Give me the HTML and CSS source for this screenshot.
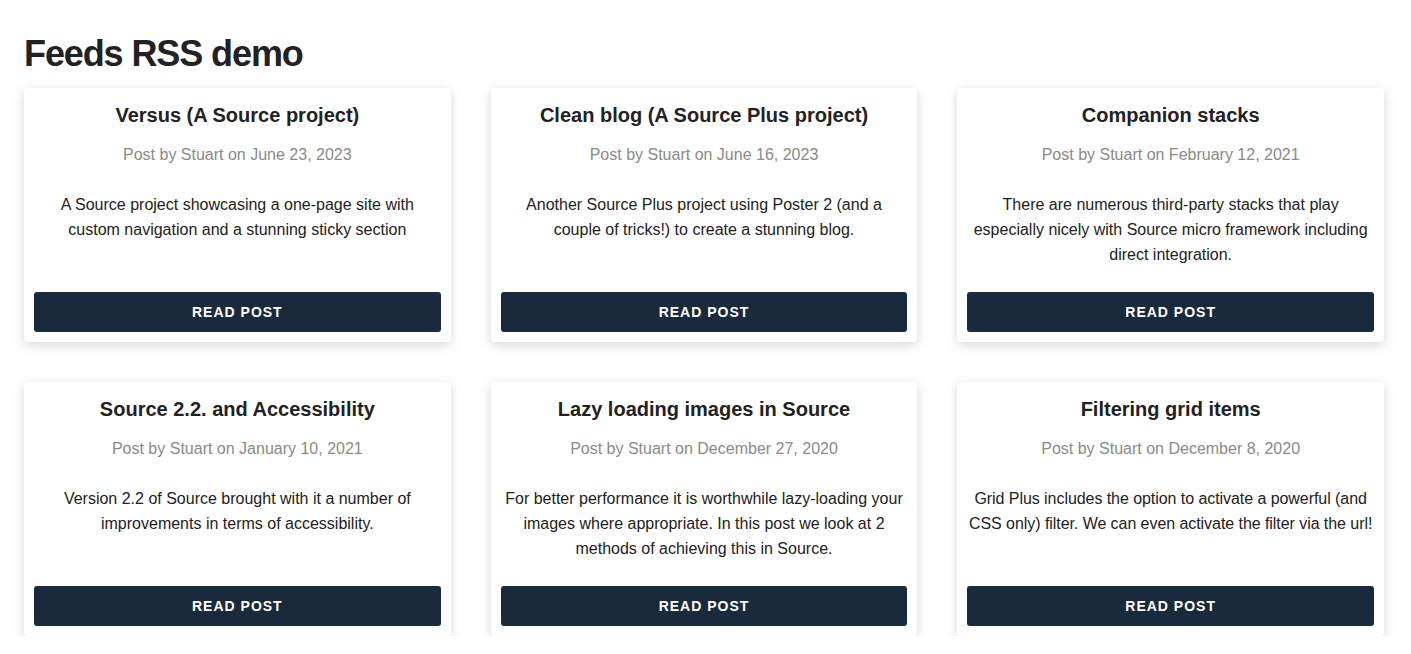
FILE: index.html
```html
<!DOCTYPE html>
<html lang="en">
<head>
<meta charset="utf-8">
<title>Feeds RSS demo</title>
<link rel="stylesheet" href="styles.css">
</head>
<body>
<main class="page">
  <h1 class="page-title">Feeds RSS demo</h1>
  <div class="grid">
    <article class="card">
      <h2 class="card-title">Versus (A Source project)</h2>
      <p class="card-meta">Post by Stuart on June 23, 2023</p>
      <p class="card-text">A Source project showcasing a one-page site with custom navigation and a stunning sticky section</p>
      <a class="card-btn" href="#">Read post</a>
    </article>
    <article class="card">
      <h2 class="card-title">Clean blog (A Source Plus project)</h2>
      <p class="card-meta">Post by Stuart on June 16, 2023</p>
      <p class="card-text">Another Source Plus project using Poster 2 (and a couple of tricks!) to create a stunning blog.</p>
      <a class="card-btn" href="#">Read post</a>
    </article>
    <article class="card">
      <h2 class="card-title">Companion stacks</h2>
      <p class="card-meta">Post by Stuart on February 12, 2021</p>
      <p class="card-text">There are numerous third-party stacks that play especially nicely with Source micro framework including direct integration.</p>
      <a class="card-btn" href="#">Read post</a>
    </article>
    <article class="card">
      <h2 class="card-title">Source 2.2. and Accessibility</h2>
      <p class="card-meta">Post by Stuart on January 10, 2021</p>
      <p class="card-text">Version 2.2 of Source brought with it a number of improvements in terms of accessibility.</p>
      <a class="card-btn" href="#">Read post</a>
    </article>
    <article class="card">
      <h2 class="card-title">Lazy loading images in Source</h2>
      <p class="card-meta">Post by Stuart on December 27, 2020</p>
      <p class="card-text">For better performance it is worthwhile lazy-loading your images where appropriate. In this post we look at 2 methods of achieving this in Source.</p>
      <a class="card-btn" href="#">Read post</a>
    </article>
    <article class="card">
      <h2 class="card-title">Filtering grid items</h2>
      <p class="card-meta">Post by Stuart on December 8, 2020</p>
      <p class="card-text card-text--tight">Grid Plus includes the option to activate a powerful (and CSS only) filter. We can even activate the filter via the url!</p>
      <a class="card-btn" href="#">Read post</a>
    </article>
  </div>
</main>
</body>
</html>
```

FILE: styles.css
```css
* { box-sizing: border-box; }

html, body {
  margin: 0;
  padding: 0;
  background: #ffffff;
}

body {
  font-family: "Liberation Sans", Arial, Helvetica, sans-serif;
  color: #222222;
}

.page {
  padding: 33px 27px 0 24px;
}

.page-title {
  margin: 0 0 14px;
  font-size: 36px;
  line-height: 41px;
  font-weight: 700;
  letter-spacing: -1.1px;
  color: #222222;
}

.grid {
  display: grid;
  grid-template-columns: repeat(3, 1fr);
  column-gap: 40px;
  row-gap: 40px;
}

.card {
  display: flex;
  flex-direction: column;
  background: #ffffff;
  border-radius: 4px;
  box-shadow: 0 3px 12px rgba(0, 0, 0, 0.16);
  padding: 15px 10px 10px;
  text-align: center;
}

.card-title {
  margin: 0;
  font-size: 20px;
  line-height: 24px;
  font-weight: 700;
  color: #222222;
}

.card-meta {
  margin: 18px 0 0;
  font-size: 16px;
  line-height: 20px;
  color: #8a8a8a;
}

.card-text {
  margin: 27px 0 25px;
  font-size: 16px;
  line-height: 25px;
  color: #222222;
}

.card-text--tight {
  margin-left: -2px;
  margin-right: -2px;
  letter-spacing: -0.06px;
}

.card-btn {
  margin-top: auto;
  display: flex;
  align-items: center;
  justify-content: center;
  height: 40px;
  border-radius: 3px;
  background: #182a3b;
  color: #ffffff;
  font-size: 14px;
  font-weight: 700;
  letter-spacing: 1px;
  text-transform: uppercase;
  text-decoration: none;
}
```
